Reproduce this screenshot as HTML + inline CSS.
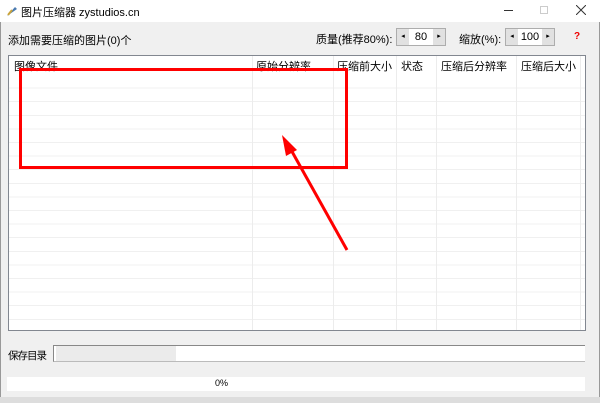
<!DOCTYPE html>
<html><head><meta charset="utf-8"><style>
*{margin:0;padding:0;box-sizing:border-box}
body{width:600px;height:403px;background:#f0f0f0;font-family:"Liberation Sans","Noto Sans CJK SC",sans-serif;font-size:11px;color:#000;position:relative;overflow:hidden}
.a{position:absolute;white-space:nowrap}
.spin{position:absolute;height:18px;border:1px solid #adadad;background:#fff;display:flex}
.spin span{display:block;text-align:center;line-height:16px}
.btn{width:12px;background:#e1e1e1;font-size:7px}
</style></head><body>
<div class="a" style="left:0;top:0;width:600px;height:22px;background:#fff"></div>
<div class="a" style="left:0;top:22px;width:1px;height:381px;background:#999"></div>
<div class="a" style="left:599px;top:22px;width:1px;height:381px;background:#999"></div>
<svg class="a" style="left:5px;top:4px" width="14" height="14"><path d="M2 12 L10 3 L12 5 Z" fill="#4a7ab0"/><path d="M3 11 L7 6" stroke="#c9a33a" stroke-width="2"/></svg>
<div class="a" style="left:21px;top:4px;font-size:11px">图片压缩器 zystudios.cn</div>
<div class="a" style="left:504px;top:10px;width:9px;height:1px;background:#333"></div>
<div class="a" style="left:540px;top:6px;width:8px;height:8px;border:1px solid #ccc"></div>
<svg class="a" style="left:576px;top:5px" width="10" height="10"><path d="M0 0L10 10M10 0L0 10" stroke="#333" stroke-width="1"/></svg>
<div class="a" style="left:8px;top:32px">添加需要压缩的图片(0)个</div>
<div class="a" style="left:316px;top:31px">质量(推荐80%):</div>
<div class="spin" style="left:396px;top:28px;width:50px"><span class="btn">◂</span><span style="flex:1">80</span><span class="btn">▸</span></div>
<div class="a" style="left:459px;top:31px">缩放(%):</div>
<div class="spin" style="left:505px;top:28px;width:50px"><span class="btn">◂</span><span style="flex:1">100</span><span class="btn">▸</span></div>
<div class="a" style="left:574px;top:31px;color:#e00;font-weight:bold;font-size:10px">?</div>
<div class="a" style="left:8px;top:55px;width:578px;height:276px;background:#fff;border:1px solid #828790;
background-image:repeating-linear-gradient(to bottom,transparent 0,transparent 12.6px,#f0f0f0 12.6px,#f0f0f0 13.6px);background-position:0 19px;background-repeat:repeat-y;background-size:100% 100%"></div>
<div class="a" style="left:9px;top:56px;width:576px;height:18px;background:#fff"></div>
<div class="a" style="left:252px;top:56px;width:1px;height:274px;background:#ececec"></div>
<div class="a" style="left:333px;top:56px;width:1px;height:274px;background:#ececec"></div>
<div class="a" style="left:396px;top:56px;width:1px;height:274px;background:#ececec"></div>
<div class="a" style="left:436px;top:56px;width:1px;height:274px;background:#ececec"></div>
<div class="a" style="left:516px;top:56px;width:1px;height:274px;background:#ececec"></div>
<div class="a" style="left:580px;top:56px;width:1px;height:274px;background:#ececec"></div>
<div class="a" style="left:14px;top:58px">图像文件</div>
<div class="a" style="left:256px;top:58px">原始分辨率</div>
<div class="a" style="left:337px;top:58px">压缩前大小</div>
<div class="a" style="left:401px;top:58px">状态</div>
<div class="a" style="left:441px;top:58px">压缩后分辨率</div>
<div class="a" style="left:521px;top:58px">压缩后大小</div>
<div class="a" style="left:19px;top:68px;width:329px;height:101px;border:3px solid #f00"></div>
<svg class="a" style="left:0;top:0" width="600" height="403"><line x1="347" y1="250" x2="290" y2="148" stroke="#f00" stroke-width="3"/><path d="M282 135 L297 150 L286 156 Z" fill="#f00"/></svg>
<div class="a" style="left:8px;top:348px;font-size:10.5px;letter-spacing:-1px">保存目录</div>
<div class="a" style="left:53px;top:345px;width:532px;height:17px;background:#fff;border-top:1px solid #888;border-bottom:1px solid #bbb;border-left:1px solid #888"></div>
<div class="a" style="left:56px;top:346px;width:120px;height:15px;background:#ebebeb"></div>
<div class="a" style="left:7px;top:377px;width:578px;height:14px;background:#fff"></div>
<div class="a" style="left:215px;top:378px;font-size:9px">0%</div>
<div class="a" style="left:0;top:397px;width:600px;height:6px;background:#ddd"></div>
</body></html>
